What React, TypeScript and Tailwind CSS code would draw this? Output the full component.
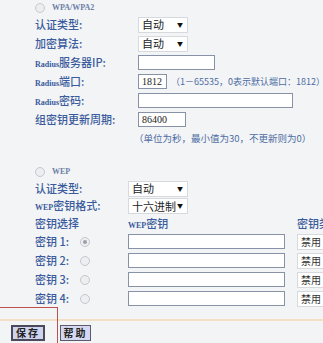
import React from "react";

const cjk = { fontFamily: '"Noto Sans CJK SC", "Noto Sans", sans-serif' };
const serif = { fontFamily: '"Liberation Serif", "DejaVu Serif", serif' };

function Radio({ checked = false }: { checked?: boolean }) {
  return (
    <span className="inline-flex h-[10px] w-[10px] items-center justify-center rounded-full border border-[#c4c8cf] bg-[#eceef1]">
      {checked && <span className="h-[4px] w-[4px] rounded-full bg-[#9aa0a8]" />}
    </span>
  );
}

function Sel({ text, w }: { text: string; w: string }) {
  return (
    <div className={`flex h-[16px] ${w} items-center justify-between border border-[#d6d9de] bg-white pl-[3px] pr-[4px] text-[11px] text-[#222]`} style={cjk}>
      <span className="leading-none">{text}</span>
      <span className="text-[6px] leading-none text-[#111]">▼</span>
    </div>
  );
}

function Inp({ w, value }: { w: string; value?: string }) {
  return (
    <div className={`flex h-[15px] ${w} shrink-0 items-center border border-[#8792a6] bg-white pl-[3px] text-[10px] leading-none text-[#222]`} style={serif}>
      {value}
    </div>
  );
}

function Radius({ rest }: { rest: string }) {
  return (
    <span className="flex items-baseline">
      <span className="text-[8px] font-bold" style={serif}>Radius</span>
      <span>{rest}</span>
    </span>
  );
}

export default function App() {
  const label = "w-[138px] shrink-0 whitespace-nowrap pl-[35px] text-[11px] font-medium text-[#3a5b9c] leading-none";
  const wepLabel = "w-[128px] shrink-0 whitespace-nowrap pl-[35px] text-[11px] font-medium text-[#3a5b9c] leading-none";
  return (
    <div className="relative h-[343px] w-[323px] overflow-hidden bg-[#f3f4f6]" style={cjk}>
      {/* WPA/WPA2 */}
      <div className="flex h-[15px] items-center pl-[35px]">
        <Radio />
        <span className="ml-[7px] text-[8px] font-bold text-[#6b7fa6]" style={serif}>WPA/WPA2</span>
      </div>
      <div className="flex h-[19px] items-center">
        <div className={label}>认证类型:</div>
        <Sel text="自动" w="w-[50px]" />
      </div>
      <div className="flex h-[19px] items-center">
        <div className={label}>加密算法:</div>
        <Sel text="自动" w="w-[50px]" />
      </div>
      <div className="flex h-[19px] items-center">
        <div className={label}><Radius rest="服务器IP:" /></div>
        <Inp w="w-[77px]" />
      </div>
      <div className="flex h-[19px] items-center whitespace-nowrap">
        <div className={label}><Radius rest="端口:" /></div>
        <Inp w="w-[29px]" value="1812" />
        <span className="ml-[4px] text-[9px] text-[#4d6da3]">（1－65535，0表示默认端口：1812）</span>
      </div>
      <div className="flex h-[19px] items-center">
        <div className={label}><Radius rest="密码:" /></div>
        <Inp w="w-[155px]" />
      </div>
      <div className="flex h-[19px] items-center">
        <div className={label}>组密钥更新周期:</div>
        <Inp w="w-[48px]" value="86400" />
      </div>
      <div className="flex h-[19px] items-center whitespace-nowrap">
        <div className="w-[134px] shrink-0" />
        <span className="text-[9.5px] text-[#4d6da3]">（单位为秒，最小值为30，不更新则为0）</span>
      </div>

      {/* WEP */}
      <div className="mt-[16px] flex h-[16px] items-center pl-[35px]">
        <Radio />
        <span className="ml-[7px] text-[8px] font-bold text-[#6b7fa6]" style={serif}>WEP</span>
      </div>
      <div className="flex h-[17px] items-center">
        <div className={wepLabel}>认证类型:</div>
        <Sel text="自动" w="w-[60px]" />
      </div>
      <div className="flex h-[18px] items-center">
        <div className={wepLabel}>
          <span className="flex items-baseline">
            <span className="text-[8px] font-bold" style={serif}>WEP</span>
            <span>密钥格式:</span>
          </span>
        </div>
        <Sel text="十六进制" w="w-[60px]" />
      </div>
      <div className="flex h-[17px] items-center whitespace-nowrap">
        <div className={wepLabel}>密钥选择</div>
        <div className="flex w-[169px] shrink-0 items-baseline text-[11px] font-medium leading-none text-[#3a5b9c]">
          <span className="text-[8px] font-bold" style={serif}>WEP</span>
          <span>密钥</span>
        </div>
        <div className="text-[11px] font-medium leading-none text-[#3a5b9c]">密钥类型</div>
      </div>
      {[1, 2, 3, 4].map((n) => (
        <div key={n} className="flex h-[19px] items-center whitespace-nowrap">
          <div className="flex w-[128px] shrink-0 items-center pl-[35px] text-[11px] font-medium leading-none text-[#3a5b9c]">
            <span className="w-[45px]">密钥 {n}:</span>
            <Radio checked={n === 1} />
          </div>
          <Inp w="w-[157px]" />
          <div className="ml-[12px] flex h-[16px] w-[40px] shrink-0 items-center border border-[#d6d9de] bg-white pl-[3px] text-[10px] text-[#333]">
            禁用
          </div>
        </div>
      ))}

      {/* bottom */}
      <div className="mt-[11px] h-[2px] w-full bg-[#f1dfc6]" />
      <div className="flex items-center gap-[15px] pl-[11px] pt-[4px]">
        <button className="flex h-[16px] w-[34px] items-center justify-center border-2 border-[#4a4a5a] bg-[#cfd3ee] text-[10px] font-bold leading-none tracking-[2px] text-[#222]">
          保存
        </button>
        <button className="flex h-[16px] w-[31px] items-center justify-center border border-[#5a5a6a] bg-[#d5d8f0] text-[10px] font-bold leading-none tracking-[2px] text-[#222]">
          帮助
        </button>
      </div>

      {/* red annotation box */}
      <div className="pointer-events-none absolute left-[-2px] top-[307px] h-[50px] w-[60px] border-[1.5px] border-[#c0504d]" />
    </div>
  );
}
